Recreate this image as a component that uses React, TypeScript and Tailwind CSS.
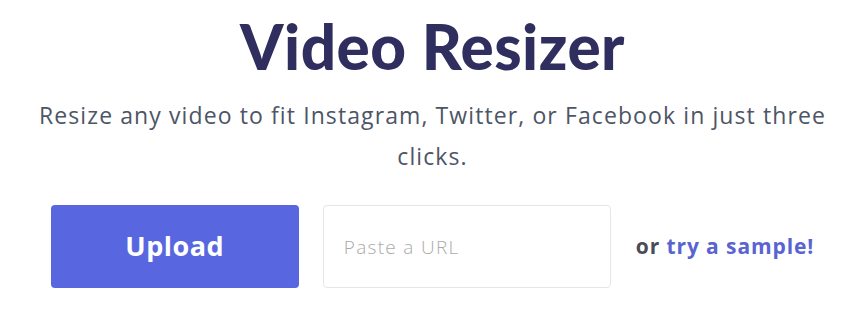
export default function App() {
  return (
    <main className="w-[865px] h-[310px] bg-white flex flex-col items-center font-['Open_Sans','Noto_Sans',sans-serif]">
      <h1 className="mt-[14px] text-[62px] leading-[64px] font-black text-[#2f2e5f] tracking-[0.5px] font-['Lato','Noto_Sans',sans-serif]">
        Video Resizer
      </h1>
      <p className="mt-[17px] w-[810px] text-center text-[23px] leading-[41px] tracking-[1.1px] text-[#4d5566]">
        Resize any video to fit Instagram, Twitter, or Facebook in just three clicks.
      </p>
      <div className="mt-[28px] flex items-center">
        <button className="w-[248px] h-[83px] rounded-[4px] bg-[#5867e0] text-white text-[27px] tracking-[0.5px] font-bold">
          Upload
        </button>
        <input
          type="text"
          placeholder="Paste a URL"
          className="ml-[24px] w-[288px] h-[83px] rounded-[4px] border border-[#e6e6e6] px-[20px] text-[19px] tracking-[1.3px] font-light text-[#444] placeholder:text-[#aaaaaa] outline-none"
        />
        <span className="ml-[25px] text-[21px] tracking-[0.9px] font-bold text-[#4a4b57]">
          or <a className="text-[#5a63d2]" href="#">try a sample!</a>
        </span>
      </div>
    </main>
  )
}
